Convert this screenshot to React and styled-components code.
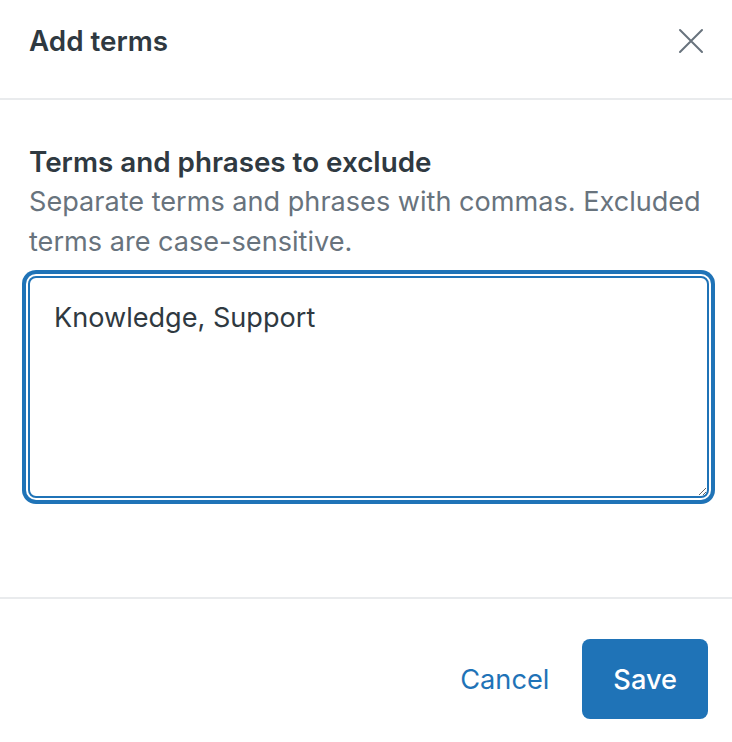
import React from 'react'
import styled, { createGlobalStyle } from 'styled-components'

const GlobalStyle = createGlobalStyle`
html,body{
  margin:0;
  padding:0;
  background:#fff;
}
body{
  font-family:Inter,"Noto Sans",sans-serif;
  -webkit-font-smoothing:antialiased;
}
`

const Modal = styled.div`
width:732px;
height:742px;
display:flex;
flex-direction:column;
background:#fff;
`

const Header = styled.div`
height:100px;
box-sizing:border-box;
display:flex;
align-items:center;
justify-content:space-between;
padding:0 26px 16px 29px;
border-bottom:2px solid #e9ebed;
`

const Title = styled.h1`
margin:0;
font-size:27.8px;
font-weight:600;
line-height:40px;
color:#2f3941;
`

const Close = styled.button`
border:0;
background:none;
padding:0;
width:30px;
height:30px;
display:flex;
align-items:center;
justify-content:center;
cursor:pointer;
`

const Body = styled.div`
flex:1;
padding:42px 23px 0 29px;
`

const Label = styled.div`
font-size:27.8px;
font-weight:600;
line-height:40px;
color:#2f3941;
`

const Hint = styled.div`
font-size:27.1px;
line-height:40px;
color:#68737d;
`

const Field = styled.textarea`
display:block;
box-sizing:border-box;
width:681px;
height:222px;
margin:14px 0 0 -1px;
padding:20px 24px 16px;
border:2px solid #1f73b7;
border-radius:8px;
box-shadow:0 0 0 2px #fff,0 0 0 6px #1f73b7;
outline:none;
font-family:Inter,"Noto Sans",sans-serif;
font-size:27.1px;
line-height:40px;
color:#2f3941;
resize:vertical;
`

const Footer = styled.div`
border-top:2px solid #e9ebed;
display:flex;
justify-content:flex-end;
align-items:center;
gap:33px;
padding:40px 24px 23px 0;
`

const Button = styled.button`
height:80px;
border-radius:8px;
font-family:Inter,"Noto Sans",sans-serif;
font-size:27.2px;
font-weight:${p => (p.primary ? 500 : 400)};
cursor:pointer;
border:0;
padding:${p => (p.primary ? '0 31px' : '0')};
background:${p => (p.primary ? '#1f73b7' : 'transparent')};
color:${p => (p.primary ? '#fff' : '#1f73b7')};
`

const CloseIcon = () => (
  <svg width="26" height="26" viewBox="0 0 26 26">
    <path d="M2 2 L24 24 M24 2 L2 24" stroke="#68737d" strokeWidth="2" strokeLinecap="round" fill="none" />
  </svg>
)

const App = () => (
  <Modal>
    <GlobalStyle />
    <Header>
      <Title>Add terms</Title>
      <Close aria-label="Close"><CloseIcon /></Close>
    </Header>
    <Body>
      <Label>Terms and phrases to exclude</Label>
      <Hint>Separate terms and phrases with commas. Excluded terms are case-sensitive.</Hint>
      <Field defaultValue="Knowledge, Support" />
    </Body>
    <Footer>
      <Button>Cancel</Button>
      <Button primary>Save</Button>
    </Footer>
  </Modal>
)

export default App
